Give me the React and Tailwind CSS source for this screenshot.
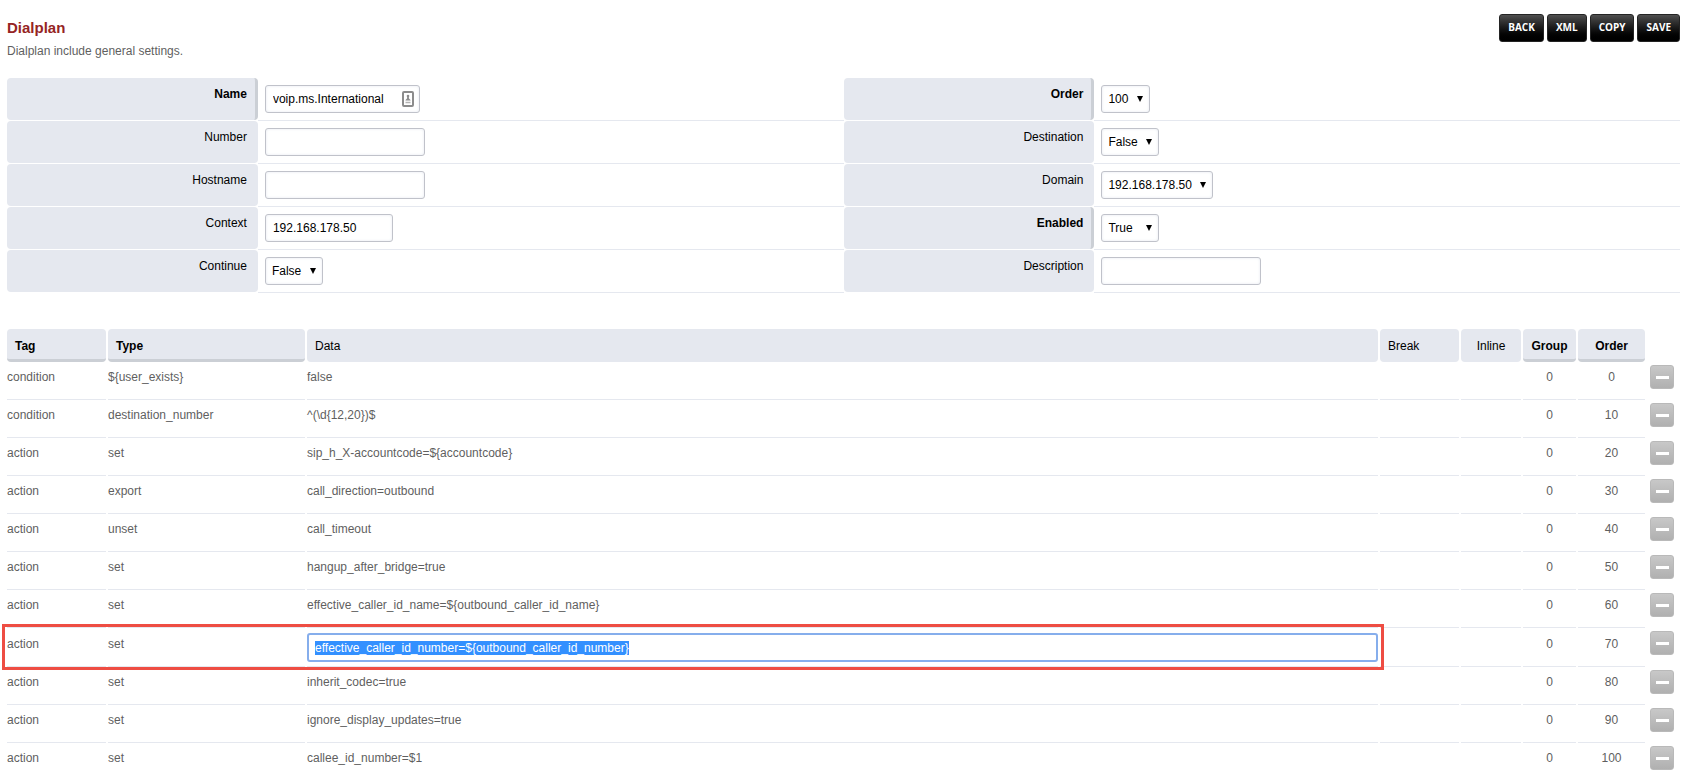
import { useEffect, useRef } from 'react'

const leftFields = [
  { id: 'name', label: 'Name', required: true, type: 'text', value: 'voip.ms.International', width: 'w-[155px]', icon: true },
  { id: 'number', label: 'Number', type: 'text', value: '', width: 'w-40' },
  { id: 'hostname', label: 'Hostname', type: 'text', value: '', width: 'w-40' },
  { id: 'context', label: 'Context', type: 'text', value: '192.168.178.50', width: 'w-32' },
  { id: 'continue', label: 'Continue', type: 'select', options: ['False', 'True'], width: 'w-[58px]' },
]

const rightFields = [
  { id: 'order', label: 'Order', required: true, type: 'select', options: ['100'], width: 'w-[49px]' },
  { id: 'destination', label: 'Destination', type: 'select', options: ['False', 'True'], width: 'w-[58px]' },
  { id: 'domain', label: 'Domain', type: 'select', options: ['192.168.178.50'], width: 'w-28' },
  { id: 'enabled', label: 'Enabled', required: true, type: 'select', options: ['True', 'False'], width: 'w-[58px]' },
  { id: 'description', label: 'Description', type: 'text', value: '', width: 'w-40' },
]

const columns = [
  { label: 'Tag', required: true, className: 'w-[99px] text-left' },
  { label: 'Type', required: true, className: 'w-[197px] text-left' },
  { label: 'Data', className: 'text-left' },
  { label: 'Break', className: 'w-[79px] text-left' },
  { label: 'Inline', className: 'w-[60px] text-center' },
  { label: 'Group', required: true, className: 'w-[53px] text-center' },
  { label: 'Order', required: true, className: 'w-[67px] text-center' },
]

const details = [
  { tag: 'condition', type: '${user_exists}', data: 'false', order: 0 },
  { tag: 'condition', type: 'destination_number', data: '^(\\d{12,20})$', order: 10 },
  { tag: 'action', type: 'set', data: 'sip_h_X-accountcode=${accountcode}', order: 20 },
  { tag: 'action', type: 'export', data: 'call_direction=outbound', order: 30 },
  { tag: 'action', type: 'unset', data: 'call_timeout', order: 40 },
  { tag: 'action', type: 'set', data: 'hangup_after_bridge=true', order: 50 },
  { tag: 'action', type: 'set', data: 'effective_caller_id_name=${outbound_caller_id_name}', order: 60 },
  { tag: 'action', type: 'set', data: 'effective_caller_id_number=${outbound_caller_id_number}', order: 70, editing: true },
  { tag: 'action', type: 'set', data: 'inherit_codec=true', order: 80 },
  { tag: 'action', type: 'set', data: 'ignore_display_updates=true', order: 90 },
  { tag: 'action', type: 'set', data: 'callee_id_number=$1', order: 100 },
]

const control = 'h-7 rounded-[3px] border border-[#c0c2ca] bg-white text-xs text-black shadow-[inset_0_0_3px_#e5e9f0] outline-none'
const cell = 'h-[38px] border-b border-[#e5e8ef] pt-[7px] align-top'
const editingCell = 'h-[39px] border-b border-[#e5e8ef] pt-2 align-top'

function ContactIcon() {
  return (
    <svg className="pointer-events-none absolute top-[6px] right-[6px]" width="12" height="16" viewBox="0 0 12 16" aria-hidden="true">
      <rect x="1" y="1" width="10" height="14" rx="1" fill="#fff" stroke="#8c8c8c" strokeWidth="2" />
      <circle cx="6" cy="5" r="1.300" fill="#8c8c8c" />
      <path d="M5.200 5.500h1.600L7 7.500l1.500 1.500v.500h-5V9L5 7.500z" fill="#8c8c8c" />
      <path d="M3.500 11.500h5" stroke="#b4b4b4" strokeWidth="1.500" />
    </svg>
  )
}

function Field({ field }) {
  return (
    <div className="flex h-[43px]">
      <div
        className={`mb-px w-[30%] rounded bg-[#e5e8ef] pt-2 text-right text-black ${
          field.required ? 'border-r-[3px] border-[#cbcfd5] pr-[8px] font-bold' : 'pr-[11px]'
        }`}
      >
        <label htmlFor={field.id}>{field.label}</label>
      </div>
      <div className="flex-1 border-b border-[#e5e8ef] pt-[7px] pl-[7px]">
        <div className={`relative ${field.width}`}>
          {field.type === 'select' ? (
            <>
              <select id={field.id} className={`${control} block w-full appearance-none pl-[6px]`}>
                {field.options.map((o) => <option key={o}>{o}</option>)}
              </select>
              <svg className="pointer-events-none absolute top-[11px] right-[7px]" width="6" height="6" viewBox="0 0 6 6" aria-hidden="true">
                <path d="M0 0h6L3 6z" fill="#000" />
              </svg>
            </>
          ) : (
            <input id={field.id} type="text" defaultValue={field.value} className={`${control} block w-full pl-[7px]`} />
          )}
          {field.icon && <ContactIcon />}
        </div>
      </div>
    </div>
  )
}

function DataInput({ value }) {
  const ref = useRef(null)

  useEffect(() => {
    ref.current.focus()
    ref.current.select()
  }, [])

  return (
    <input
      ref={ref}
      type="text"
      aria-label="Data"
      defaultValue={value}
      className="block h-[29px] w-full rounded-[3px] border-2 border-[#86aeec] bg-white pl-[6px] text-xs text-black outline-none selection:bg-[#3390ff] selection:text-white"
    />
  )
}

export default function App() {
  return (
    <div className="bg-white pr-2 pl-[7px] font-['Liberation_Sans',Arial,sans-serif] text-xs text-[#5f5f5f]">
      <header className="flex h-[78px] justify-between pt-[14px]">
        <div>
          <h1 className="pt-1 text-[15px] leading-5 font-bold text-[#952424]">Dialplan</h1>
          <p className="pt-[5px]">Dialplan include general settings.</p>
        </div>
        <div className="flex items-start gap-[3px]">
          {['Back', 'XML', 'Copy', 'Save'].map((b) => (
            <button
              key={b}
              type="button"
              className="h-7 rounded-[3px] border border-[#242424] bg-linear-to-b from-[#4f4f4f] to-black px-2 font-['Open_Sans',sans-serif] text-[10px] font-bold text-white uppercase"
            >
              {b}
            </button>
          ))}
        </div>
      </header>

      <form className="grid grid-cols-2">
        <div>{leftFields.map((f) => <Field key={f.id} field={f} />)}</div>
        <div>{rightFields.map((f) => <Field key={f.id} field={f} />)}</div>
      </form>

      <table className="-mx-[2px] mt-9 w-[calc(100%+4px)] table-fixed border-separate border-spacing-x-[2px] border-spacing-y-0">
        <thead>
          <tr>
            {columns.map((c) => (
              <th
                key={c.label}
                className={`h-[33px] rounded bg-[#e5e8ef] text-black ${c.className} ${
                  c.className.includes('text-left') ? 'px-2' : ''
                } ${c.required ? 'border-b-[3px] border-[#cbcfd5] pt-[3px] font-bold' : 'font-normal'}`}
              >
                {c.label}
              </th>
            ))}
            <th className="w-[33px]" aria-label="Delete" />
          </tr>
        </thead>
        <tbody>
          {details.map((d) => {
            const td = d.editing ? editingCell : cell
            return (
              <tr key={d.order}>
                <td className={td}>{d.tag}</td>
                <td className={td}>{d.type}</td>
                {d.editing ? (
                  <td className="relative border-b border-[#e5e8ef] pt-[5px] align-top">
                    <DataInput value={d.data} />
                    {/* red outline around the tag, type and data cells */}
                    <div className="pointer-events-none absolute -top-1 -right-[6px] -bottom-1 -left-[305px] border-[3px] border-[#ee4d43]" />
                  </td>
                ) : (
                  <td className={td}>{d.data}</td>
                )}
                <td className={td} />
                <td className={td} />
                <td className={`${td} text-center`}>0</td>
                <td className={`${td} text-center`}>{d.order}</td>
                <td className="pt-[3px] pl-[3px] align-top">
                  <button
                    type="button"
                    aria-label={`Delete ${d.order}`}
                    className="grid size-6 place-items-center rounded-[3px] border border-[#b9b9b9] bg-linear-to-b from-[#c8c8c8] to-[#b0b0b0]"
                  >
                    <span className="h-[3px] w-[13px] bg-white" />
                  </button>
                </td>
              </tr>
            )
          })}
        </tbody>
      </table>
    </div>
  )
}
